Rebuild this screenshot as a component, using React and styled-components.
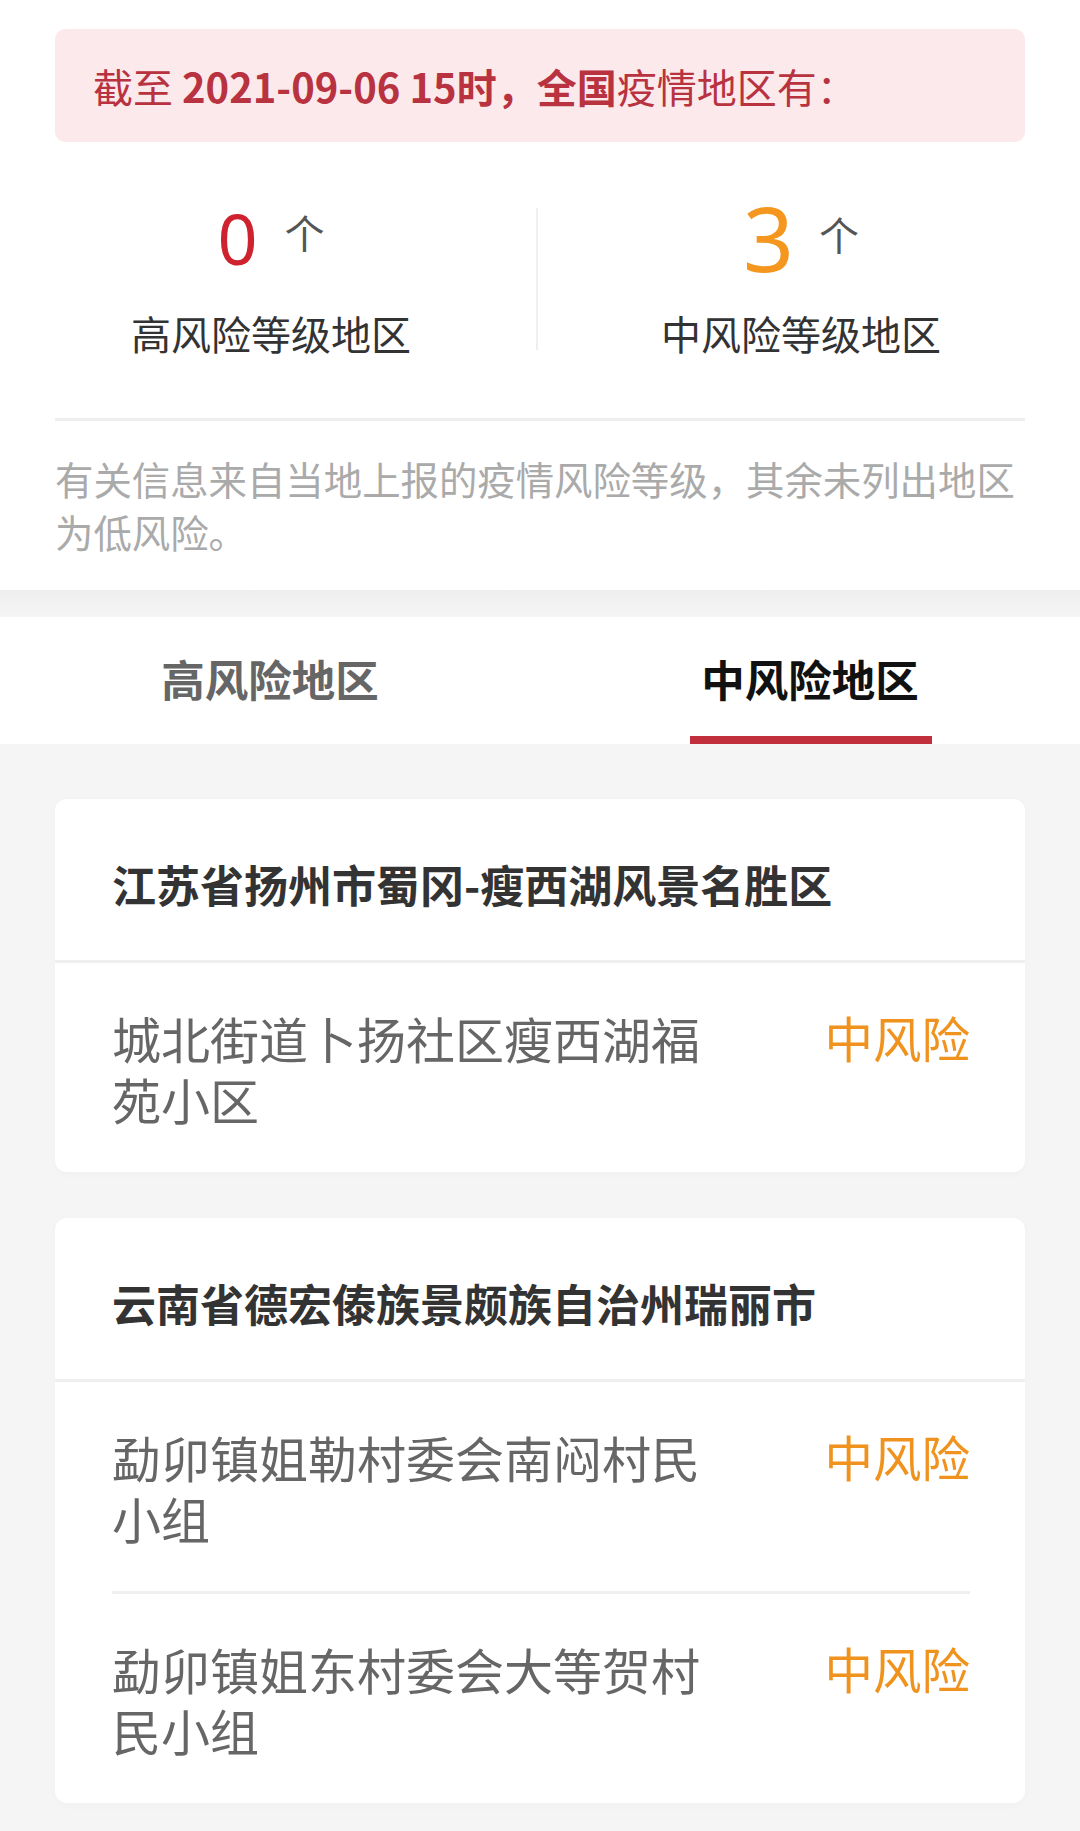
import React, { useState } from 'react'
import styled, { createGlobalStyle } from 'styled-components'

const GlobalStyle = createGlobalStyle`
    html, body {
        margin: 0;
        padding: 0;
        background-color: #f5f5f5;
    }
    body {
        font-family: "Noto Sans CJK SC", "Noto Sans", sans-serif;
    }
`

const cards = [
    {
        area: '江苏省扬州市蜀冈-瘦西湖风景名胜区',
        places: ['城北街道卜扬社区瘦西湖福苑小区']
    },
    {
        area: '云南省德宏傣族景颇族自治州瑞丽市',
        places: ['勐卯镇姐勒村委会南闷村民小组', '勐卯镇姐东村委会大等贺村民小组']
    }
]

const Page = styled.div`
    width: 1080px;
    min-height: 1831px;
    background-color: #f5f5f5;
`

const Summary = styled.div`
    background-color: #fff;
    padding: 29px 55px 32px;
`

const Banner = styled.div`
    height: 113px;
    display: flex;
    align-items: center;
    padding: 0 38px;
    background-color: #fbe9eb;
    border-radius: 10px;
    color: #b8323f;
    font-size: 40px;

    b {
        font-weight: 700;
    }
`

const Counts = styled.div`
    border-bottom: 3px solid #eeeeee;
    padding: 58px 0 61px;
`

const CountGrid = styled.div`
    display: grid;
    grid-template-columns: 536px 2px 1fr;
    align-items: center;
    margin: 0 -55px;
`

const CountCol = styled.div`
    display: flex;
    flex-direction: column;
    align-items: center;
    padding: ${props => props.right ? '0 16px 0 0' : '0 0 0 6px'};
`

const Divider = styled.div`
    height: 142px;
    background-color: #efefef;
`

const CountRow = styled.div`
    display: flex;
    align-items: baseline;
    height: 76px;
`

const Number = styled.span`
    font-family: "Liberation Sans Narrow", "Noto Sans", sans-serif;
    font-size: ${props => props.size}px;
    line-height: 76px;
    color: ${props => props.color};
`

const Unit = styled.span`
    font-size: 40px;
    line-height: 76px;
    color: #555;
    margin-left: ${props => props.gap}px;
    position: relative;
    top: ${props => props.lift}px;
`

const CountLabel = styled.div`
    margin-top: 33px;
    font-size: 40px;
    line-height: 48px;
    color: #333;
`

const Note = styled.p`
    margin: 31px 0 0;
    font-size: 38.4px;
    line-height: 53px;
    color: #aaaaaa;
`

const Gap = styled.div`
    height: 27px;
    background: linear-gradient(#eeeeee, #f5f5f5);
`

const Tabs = styled.div`
    display: grid;
    grid-template-columns: 1fr 1fr;
    height: 127px;
    background-color: #fff;
`

const Tab = styled.div`
    position: relative;
    display: flex;
    justify-content: center;
    align-items: center;
    padding-bottom: 4px;
    font-size: 43.5px;
    font-weight: 700;
    color: ${props => props.active ? '#111' : '#666'};
    cursor: pointer;

    &::after {
        content: '';
        display: ${props => props.active ? 'block' : 'none'};
        position: absolute;
        bottom: 0;
        left: 150px;
        width: 242px;
        height: 8px;
        background-color: #c12f3c;
    }
`

const List = styled.div`
    display: flex;
    flex-direction: column;
    gap: 46px;
    padding: 55px 55px 33px;
`

const Card = styled.div`
    background-color: #fff;
    border-radius: 12px;
    box-shadow: 0 2px 10px rgba(0, 0, 0, 0.025);
    overflow: hidden;
`

const CardHead = styled.div`
    height: 164px;
    box-sizing: border-box;
    display: flex;
    align-items: center;
    padding: 8px 57px 0;
    border-bottom: 3px solid #efefef;
    font-size: 44px;
    font-weight: 700;
    color: #333;
`

const Place = styled.div`
    display: flex;
    justify-content: space-between;
    align-items: flex-start;
    margin: 0 55px 0 57px;
    padding: 44px 0 43px;
    border-top: ${props => props.first ? 'none' : '3px solid #efefef'};
`

const PlaceName = styled.div`
    width: 600px;
    font-size: 49px;
    line-height: 61px;
    color: #666;
`

const Level = styled.div`
    font-size: 48.5px;
    line-height: 61px;
    color: #f0921e;
`

export default function App() {
    const [tab, setTab] = useState(1)

    return (
        <Page>
            <GlobalStyle />
            <Summary>
                <Banner>
                    <span>截至 <b>2021-09-06 15时，全国</b>疫情地区有：</span>
                </Banner>
                <Counts>
                    <CountGrid>
                        <CountCol>
                            <CountRow>
                                <Number color="#cf222f" size={70}>0</Number>
                                <Unit gap={27} lift={-16}>个</Unit>
                            </CountRow>
                            <CountLabel>高风险等级地区</CountLabel>
                        </CountCol>
                        <Divider />
                        <CountCol right>
                            <CountRow>
                                <Number color="#f5961f" size={89}>3</Number>
                                <Unit gap={25} lift={-21}>个</Unit>
                            </CountRow>
                            <CountLabel>中风险等级地区</CountLabel>
                        </CountCol>
                    </CountGrid>
                </Counts>
                <Note>有关信息来自当地上报的疫情风险等级，其余未列出地区为低风险。</Note>
            </Summary>
            <Gap />
            <Tabs>
                <Tab active={tab === 0} onClick={() => setTab(0)}>高风险地区</Tab>
                <Tab active={tab === 1} onClick={() => setTab(1)}>中风险地区</Tab>
            </Tabs>
            <List>
                {cards.map(card => (
                    <Card key={card.area}>
                        <CardHead>{card.area}</CardHead>
                        {card.places.map((place, i) => (
                            <Place key={place} first={i === 0}>
                                <PlaceName>{place}</PlaceName>
                                <Level>中风险</Level>
                            </Place>
                        ))}
                    </Card>
                ))}
            </List>
        </Page>
    )
}
